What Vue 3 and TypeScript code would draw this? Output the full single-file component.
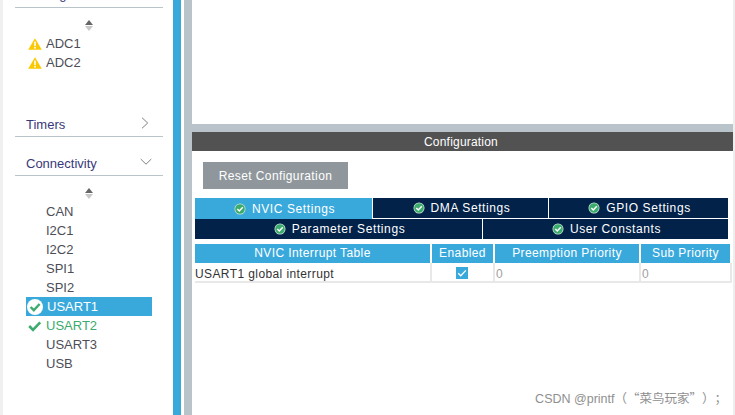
<script setup lang="ts">
interface PeripheralItem {
  name: string;
  state?: "warn" | "ok" | "selected";
}

const analog: PeripheralItem[] = [
  { name: "ADC1", state: "warn" },
  { name: "ADC2", state: "warn" },
];

const connectivity: PeripheralItem[] = [
  { name: "CAN" },
  { name: "I2C1" },
  { name: "I2C2" },
  { name: "SPI1" },
  { name: "SPI2" },
  { name: "USART1", state: "selected" },
  { name: "USART2", state: "ok" },
  { name: "USART3" },
  { name: "USB" },
];

const topTabs = ["NVIC Settings", "DMA Settings", "GPIO Settings"];
const bottomTabs = ["Parameter Settings", "User Constants"];
</script>

<template>
  <div class="page">
    <aside class="sidebar">
      <div class="section-clipped"><span>Analog</span></div>
      <div class="sorter">
        <span class="up" />
        <span class="down" />
      </div>
      <ul class="items analog">
        <li v-for="item in analog" :key="item.name" class="item">
          <svg class="warn" viewBox="0 0 14 12" width="14" height="12">
            <path d="M7 0.3 L13.8 11.8 L0.2 11.8 Z" fill="#fcc800" />
            <rect x="6.2" y="3.6" width="1.6" height="4.6" fill="#fff" />
            <rect x="6.2" y="9" width="1.6" height="1.6" fill="#fff" />
          </svg>
          <span>{{ item.name }}</span>
        </li>
      </ul>
      <div class="section timers">
        <span>Timers</span>
        <svg viewBox="0 0 8 12" width="8" height="12">
          <path d="M1 0.7 L6.7 6 L1 11.3" fill="none" stroke="#808080" stroke-width="1" />
        </svg>
      </div>
      <div class="section connectivity">
        <span>Connectivity</span>
        <svg viewBox="0 0 12 8" width="12" height="8">
          <path d="M0.7 1 L6 6.2 L11.3 1" fill="none" stroke="#808080" stroke-width="1" />
        </svg>
      </div>
      <div class="sorter">
        <span class="up" />
        <span class="down" />
      </div>
      <ul class="items">
        <li
          v-for="item in connectivity"
          :key="item.name"
          class="item"
          :class="item.state"
        >
          <svg v-if="item.state === 'selected'" class="state" viewBox="0 0 18 18" width="18" height="18">
            <circle cx="9" cy="9" r="8" fill="#fff" />
            <path d="M4.6 9 L7.8 12.2 L13.6 6" fill="none" stroke="#3cab6e" stroke-width="2.4" />
          </svg>
          <svg v-else-if="item.state === 'ok'" class="state" viewBox="0 0 18 18" width="18" height="18">
            <path d="M3.2 9 L7 12.8 L14.2 5.4" fill="none" stroke="#3cab6e" stroke-width="2.6" />
          </svg>
          <span>{{ item.name }}</span>
        </li>
      </ul>
    </aside>

    <div class="blue-bar" />
    <div class="gutter" />

    <main class="main">
      <div class="canvas" />
      <div class="splitter" />
      <div class="config-title">Configuration</div>
      <div class="config-body">
        <button class="reset" type="button">Reset Configuration</button>
        <div class="tabs top">
          <div
            v-for="(tab, i) in topTabs"
            :key="tab"
            class="tab"
            :class="{ active: i === 0 }"
          >
            <svg viewBox="0 0 12 12" width="12" height="12">
              <circle cx="6" cy="6" r="5.5" fill="#cfe9d8" />
              <circle cx="6" cy="6" r="4.8" fill="#3cab6e" />
              <path d="M3.3 6 L5.3 8 L8.8 4.3" fill="none" stroke="#fff" stroke-width="1.5" />
            </svg>
            <span>{{ tab }}</span>
          </div>
        </div>
        <div class="tabs bottom">
          <div v-for="tab in bottomTabs" :key="tab" class="tab">
            <svg viewBox="0 0 12 12" width="12" height="12">
              <circle cx="6" cy="6" r="5.5" fill="#cfe9d8" />
              <circle cx="6" cy="6" r="4.8" fill="#3cab6e" />
              <path d="M3.3 6 L5.3 8 L8.8 4.3" fill="none" stroke="#fff" stroke-width="1.5" />
            </svg>
            <span>{{ tab }}</span>
          </div>
        </div>
        <div class="table">
          <div class="th">NVIC Interrupt Table</div>
          <div class="th">Enabled</div>
          <div class="th">Preemption Priority</div>
          <div class="th">Sub Priority</div>
          <div class="td name">USART1 global interrupt</div>
          <div class="td check">
            <span class="checkbox">
              <svg viewBox="0 0 12 12" width="12" height="12">
                <path d="M2.2 6.2 L4.8 8.8 L9.8 3.4" fill="none" stroke="#fff" stroke-width="1.3" />
              </svg>
            </span>
          </div>
          <div class="td num">0</div>
          <div class="td num">0</div>
        </div>
      </div>
      <div class="watermark">CSDN @printf<span class="cjk">（“菜鸟玩家”）；</span></div>
    </main>
  </div>
</template>

<style>
html,
body {
  margin: 0;
  background: #fff;
  overflow: hidden;
}
</style>

<style scoped>
.page {
  display: flex;
  width: 735px;
  height: 415px;
  overflow: hidden;
  font-family: "Liberation Sans", Arial, sans-serif;
  background: #fff;
}

.sidebar {
  box-sizing: border-box;
  flex: 0 0 173px;
  width: 173px;
  height: 415px;
  padding: 0 10px 0 12px;
  border-left: 3px solid #f0f0f0;
  overflow: hidden;
}

.section-clipped {
  height: 7px;
  border-bottom: 1px solid #b9c4ca;
  padding-left: 11px;
  font-size: 13px;
  color: #39397a;
  overflow: hidden;
}

.section-clipped span {
  display: block;
  margin-top: -13px;
  line-height: 15px;
}

.sorter {
  display: flex;
  flex-direction: column;
  align-items: center;
  gap: 1px;
  padding: 12px 0 0;
  height: 14px;
}

.up,
.down {
  width: 0;
  height: 0;
  border-left: 4px solid transparent;
  border-right: 4px solid transparent;
}

.up {
  border-bottom: 5px solid #666;
}

.down {
  border-top: 5px solid #c8c8c8;
}

.items {
  list-style: none;
  margin: 0;
  padding: 0;
}

.analog {
  height: 79px;
}

.item {
  display: flex;
  align-items: center;
  height: 19px;
  margin-left: 11px;
  padding-left: 20px;
  font-size: 13px;
  color: #4d4d57;
  position: relative;
  width: 106px;
}

.warn {
  position: absolute;
  left: 2px;
  top: 4px;
}

.state {
  position: absolute;
  left: 0;
  top: 1px;
}

.item.selected {
  background: #39a9dc;
  color: #fff;
  padding-left: 21px;
  width: 105px;
}

.item.ok {
  color: #3cab6e;
}

.section {
  display: flex;
  align-items: center;
  justify-content: space-between;
  box-sizing: border-box;
  height: 24px;
  padding: 0 14px 0 11px;
  border-bottom: 1px solid #b9c4ca;
  font-size: 13px;
  color: #39397a;
}

.timers svg {
  margin-top: -3px;
}

.connectivity {
  margin-top: 15px;
  padding-right: 11px;
}

.connectivity svg {
  margin-top: -4px;
}

.blue-bar {
  flex: 0 0 8px;
  background: #39a9dc;
}

.gutter {
  flex: 0 0 3px;
}

.main {
  flex: 1;
  position: relative;
  display: flex;
  flex-direction: column;
  border-left: 8px solid #b9c4ca;
  border-right: 2px solid #eee;
  min-width: 0;
}

.canvas {
  height: 124px;
}

.splitter {
  height: 8px;
  background: #b9c4ca;
}

.config-title {
  height: 19px;
  line-height: 20px;
  padding-right: 3px;
  text-align: center;
  font-size: 12px;
  letter-spacing: 0.2px;
  color: #fff;
  background: #525252;
}

.config-body {
  padding: 11px 3px 0;
}

.reset {
  display: block;
  width: 145px;
  height: 27px;
  margin: 0 0 9px 8px;
  padding: 0;
  border: 0;
  background: #8f979c;
  color: #fff;
  font: 12px "Liberation Sans", Arial, sans-serif;
  letter-spacing: 0.4px;
}

.tabs {
  display: flex;
  width: 533px;
}

.tab {
  display: flex;
  align-items: center;
  justify-content: center;
  gap: 6px;
  box-sizing: border-box;
  padding-left: 2px;
  background: #022249;
  color: #fff;
  font-size: 12px;
  letter-spacing: 0.6px;
}

.top .tab {
  height: 21px;
  border-right: 1px solid #fff;
  border-bottom: 1px solid #fff;
}

.top .tab:nth-child(1) {
  width: 178px;
}

.top .tab:nth-child(2) {
  width: 176px;
}

.top .tab:nth-child(3) {
  width: 179px;
  border-right: 0;
}

.top .tab.active {
  background: #39a9dc;
  border-bottom: 0;
}

.bottom .tab {
  height: 20px;
}

.bottom .tab:nth-child(1) {
  width: 288px;
  border-right: 1px solid #fff;
}

.bottom .tab:nth-child(2) {
  width: 245px;
}

.table {
  display: grid;
  grid-template-columns: 235px 61px 144px 89px;
  column-gap: 2px;
  margin-top: 5px;
  width: 535px;
}

.th {
  height: 19px;
  line-height: 19px;
  text-align: center;
  background: #39a9dc;
  color: #fff;
  font-size: 12px;
  letter-spacing: 0.4px;
}

.td {
  box-sizing: border-box;
  height: 20px;
  line-height: 22px;
  border-bottom: 2px solid #e8e8e8;
  font-size: 12px;
  color: #333;
  box-shadow: 2px 0 0 #e8e8e8;
}

.name {
  letter-spacing: 0.4px;
}

.check {
  display: flex;
  align-items: center;
  justify-content: center;
  padding: 2px 2px 0 0;
}

.checkbox {
  display: flex;
  width: 12px;
  height: 12px;
  background: #39a9dc;
}

.num {
  padding-left: 1px;
  color: #a0a0a0;
}

.watermark {
  position: absolute;
  right: 6px;
  bottom: 8px;
  font-family: "Liberation Sans", "Noto Sans CJK SC", sans-serif;
  font-size: 12.5px;
  color: #8f8f8f;
  white-space: nowrap;
}

.cjk {
  font-family: "Noto Sans CJK SC", sans-serif;
  text-spacing-trim: space-all;
}
</style>
